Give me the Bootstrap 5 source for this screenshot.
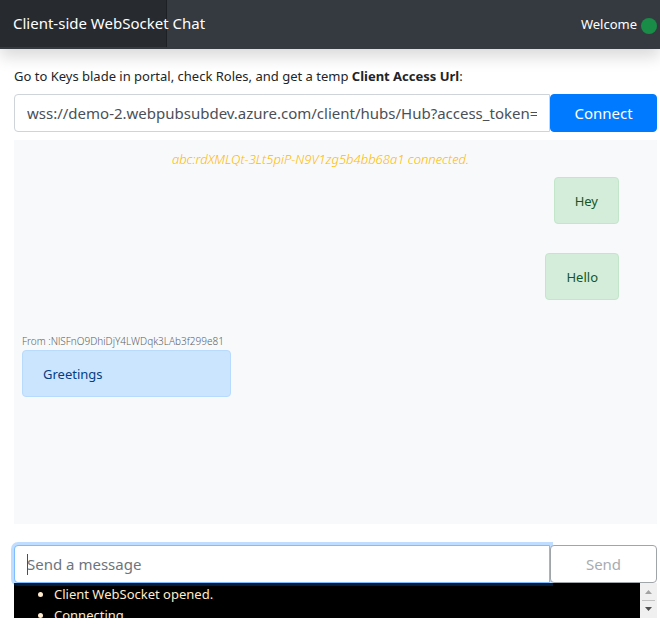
<!DOCTYPE html>
<html lang="en">
<head>
<meta charset="utf-8">
<meta name="viewport" content="width=device-width, initial-scale=1">
<title>Client-side WebSocket Chat</title>
<link href="https://cdn.jsdelivr.net/npm/bootstrap@5.3.0/dist/css/bootstrap.min.css" rel="stylesheet">
<style>
  body { font-family: "Noto Sans", "Open Sans", sans-serif; font-size: 13px; line-height: 21px; color: #212529; background: #fff; }
  .topbar { background: #343a40; height: 49px; padding-right: 3px; box-shadow: 0 8px 16px rgba(0,0,0,.15); }
  .brand-link { width: 167px; height: 47px; padding-left: 13px; line-height: 47px; font-size: 15px; white-space: nowrap; color: #fff; background: rgba(0,0,0,.25); box-shadow: inset -1px 0 0 rgba(0,0,0,.25); }
  .brand-link:hover { color: #fff; }
  .status-dot { width: 16px; height: 16px; background: #198c48; margin-top: 2px; }
  .page-main { padding: 17px 3px 0 14px; }
  .url-label { margin-bottom: 7px; }
  .field-row .form-control { height: 38px; font-size: 15px; line-height: 24px; border-color: #ced4da; border-radius: 4px 0 0 4px; color: #495057; }
  .field-row .btn { width: 107px; height: 38px; padding: 0; font-size: 15px; border-radius: 4px; }
  .btn-connect, .btn-connect:hover { background: #007bff; border-color: #007bff; color: #fff; }
  .btn-send:disabled { color: #a7acb1; border-color: #a0a5aa; background: #fff; opacity: 1; }
  .field-row .message-input { border-color: #80bdff; box-shadow: 0 0 0 3px rgba(0,123,255,.25); }
  .message-input::placeholder { color: #6c757d; }
  .text-caret { left: 13px; top: 9px; width: 1px; height: 21px; background: #495057; }
  .chat-log { height: 384px; padding: 9px 38px 0 8px; margin-bottom: 21px; background: #f8f9fa; }
  .system-note { color: #ffb900; font-weight: 300; font-style: italic; margin-bottom: 7px; }
  .bubble { padding: 13px 20px 11px; border: 1px solid; border-radius: 4px; }
  .bubble-own { color: #155724; background: #d4edda; border-color: #c3e6cb; margin-bottom: 29px; }
  .bubble-peer { min-width: 209px; color: #004085; background: #cce5ff; border-color: #b8daff; }
  .sender { font-size: 10px; line-height: 16px; font-weight: 300; color: #5a6268; margin: 4px 0 1px; }
  .console { height: 35px; background: #000; color: #ffebcd; }
  .console ul { padding: 1px 0 0 40px; }
  .overlay-ring { z-index: 2; }
  .scroll-rail { width: 17px; background: #f0f0f0; }
</style>
<script src="https://cdn.jsdelivr.net/npm/bootstrap@5.3.0/dist/js/bootstrap.bundle.min.js"></script>
</head>
<body>
<header class="topbar d-flex justify-content-between">
  <a href="#" class="brand-link text-decoration-none">Client-side WebSocket Chat</a>
  <div class="d-flex align-items-center gap-1 text-white"><span>Welcome</span><span class="status-dot rounded-circle"></span></div>
</header>
<main class="page-main">
  <label for="url" class="url-label d-block">Go to Keys blade in portal, check Roles, and get a temp <strong>Client Access Url</strong>:</label>
  <div class="field-row d-flex mb-2">
    <input id="url" type="text" class="form-control flex-fill" value="wss://demo-2.webpubsubdev.azure.com/client/hubs/Hub?access_token=eyJhbGciOi">
    <button type="button" class="btn btn-connect flex-shrink-0">Connect</button>
  </div>
  <section class="chat-log overflow-hidden" aria-label="Messages">
    <p class="system-note text-center">abc:rdXMLQt-3Lt5piP-N9V1zg5b4bb68a1 connected.</p>
    <div class="d-flex justify-content-end"><div class="bubble bubble-own">Hey</div></div>
    <div class="d-flex justify-content-end"><div class="bubble bubble-own">Hello</div></div>
    <div class="d-inline-block">
      <div class="sender">From :NlSFnO9DhiDjY4LWDqk3LAb3f299e81</div>
      <div class="bubble bubble-peer">Greetings</div>
    </div>
  </section>
  <div class="field-row d-flex position-relative overlay-ring">
    <input type="text" class="form-control message-input flex-fill" placeholder="Send a message" aria-label="Send a message">
    <span class="text-caret position-absolute"></span>
    <button type="button" class="btn btn-send flex-shrink-0" disabled>Send</button>
  </div>
  <section class="console d-flex overflow-hidden" aria-label="Connection log">
    <ul class="flex-fill mb-0">
      <li>Client WebSocket opened.</li>
      <li>Connecting</li>
    </ul>
    <div class="scroll-rail flex-shrink-0">
      <svg class="d-block" width="17" height="35" viewBox="0 0 17 35" aria-hidden="true"><path d="M5 11L8.500 7L12 11Z" fill="#a3a3a3"/><path d="M2 17.500H15" stroke="#c1c1c1"/><path d="M5 24L8.500 28L12 24Z" fill="#505050"/></svg>
    </div>
  </section>
</main>
</body>
</html>
